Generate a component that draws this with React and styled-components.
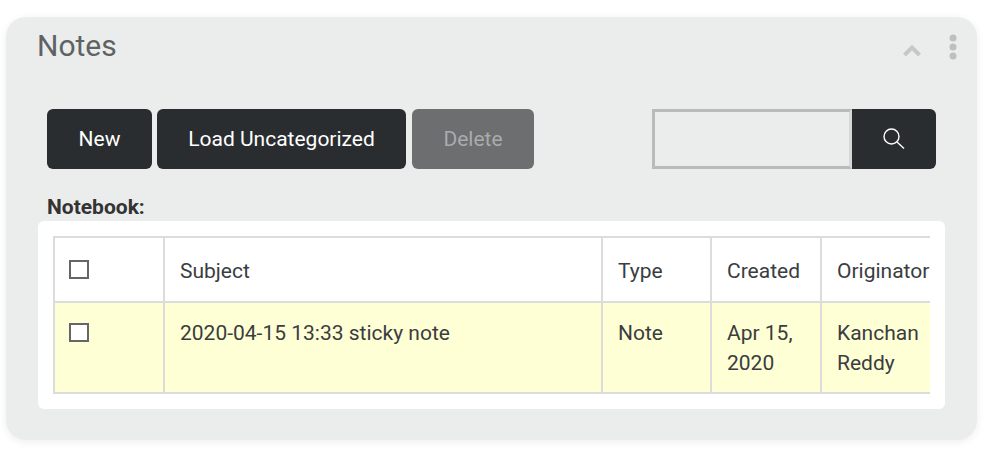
import React from "react";
import styled, { createGlobalStyle } from "styled-components";

const Global = createGlobalStyle`
  html, body { margin: 0; padding: 0; background: #fff; }
  body { font-family: Roboto, "Liberation Sans", sans-serif; color: #333; }
`;

const Page = styled.div`
  width: 989px;
  height: 452px;
  padding: 17px 12px 12px 6px;
  box-sizing: border-box;
`;

const Panel = styled.section`
  height: 423px;
  box-sizing: border-box;
  background: #ebeded;
  border-radius: 20px;
  box-shadow: 0 2px 8px rgba(0, 0, 0, 0.07);
  padding: 0 32px 0 32px;
`;

const Header = styled.header`
  display: flex;
  align-items: flex-start;
  justify-content: space-between;
  height: 92px;
  margin-left: -1px;
`;

const Title = styled.h2`
  margin: 11px 0 0;
  font-size: 30px;
  line-height: 36px;
  font-weight: 400;
  color: #5f6262;
`;

const HeaderIcons = styled.div`
  display: flex;
  align-items: flex-start;
  margin: 17px -12px 0 0;
  gap: 28px;
`;

const Toolbar = styled.div`
  display: flex;
  align-items: stretch;
  height: 60px;
  margin-left: 9px;
  width: 889px;
`;

const Button = styled.button`
  height: 60px;
  width: ${(p) => p.$w}px;
  margin-right: ${(p) => p.$mr || 0}px;
  padding: 0;
  border: 0;
  border-radius: 6px;
  background: ${(p) => (p.disabled ? "#6c6e70" : "#2a2d30")};
  color: ${(p) => (p.disabled ? "#a9abac" : "#fff")};
  font: 400 21px/30px Roboto, sans-serif;
`;

const Search = styled.div`
  display: flex;
  margin-left: auto;
`;

const SearchInput = styled.input`
  width: 200px;
  height: 60px;
  box-sizing: border-box;
  border: 3px solid #b9baba;
  border-right-color: #d6d7d7;
  background: #ebeded;
  outline: none;
  padding: 0 8px;
`;

const SearchButton = styled.button`
  width: 84px;
  height: 60px;
  padding: 0;
  border: 0;
  border-radius: 0 6px 6px 0;
  background: #2a2d30;
  display: flex;
  align-items: center;
  justify-content: center;
`;

const Label = styled.div`
  margin: 26px 0 0 9px;
  height: 26px;
  font-size: 21px;
  line-height: 24px;
  font-weight: 700;
  color: #333;
`;

const Card = styled.div`
  background: #fff;
  border-radius: 6px;
  width: 907px;
  height: 188px;
  box-sizing: border-box;
  padding: 15px;
`;

const TableClip = styled.div`
  width: 877px;
  overflow: hidden;
`;

const Table = styled.table`
  width: 877px;
  table-layout: fixed;
  border-collapse: collapse;
  font-size: 21px;
  line-height: 30px;
  color: #3a3d40;
`;

const Cell = styled.td`
  border: 2px solid #dcdcdc;
  padding: 15px 15px 14px;
  vertical-align: top;
  white-space: ${(p) => (p.$nowrap ? "nowrap" : "normal")};
  overflow: hidden;
  box-sizing: border-box;
`;

const HeadCell = styled(Cell).attrs({ as: "th" })`
  font-weight: 400;
  text-align: left;
  height: 65px;
  padding-top: 18px;
  padding-bottom: 15px;
  vertical-align: middle;
`;

const Row = styled.tr`
  background: ${(p) => p.$bg};
`;

const Check = styled.span`
  display: block;
  width: 20px;
  height: 19px;
  box-sizing: border-box;
  border: 2px solid #666;
  background: #fff;
  margin-top: ${(p) => p.$mt}px;
  margin-left: -1px;
`;

const Chevron = () => (
  <svg width="18" height="14" viewBox="0 0 18 14" style={{ marginTop: 10 }}>
    <path d="M1.5 11 L9 3.5 L16.5 11" fill="none" stroke="#c6c8c8" strokeWidth="4" />
  </svg>
);

const Dots = () => (
  <svg width="8" height="26" viewBox="0 0 8 26">
    <circle cx="4" cy="4" r="3.5" fill="#bdbfc0" />
    <circle cx="4" cy="13" r="3.5" fill="#bdbfc0" />
    <circle cx="4" cy="22" r="3.5" fill="#bdbfc0" />
  </svg>
);

const Magnifier = () => (
  <svg width="24" height="24" viewBox="0 0 24 24">
    <circle cx="9.5" cy="9.5" r="7.5" fill="none" stroke="#fff" strokeWidth="1.4" />
    <path d="M15 15 L22 21.5" stroke="#fff" strokeWidth="1.4" fill="none" />
  </svg>
);

export default function App() {
  return (
    <Page>
      <Global />
      <Panel>
        <Header>
          <Title>Notes</Title>
          <HeaderIcons>
            <Chevron />
            <Dots />
          </HeaderIcons>
        </Header>
        <Toolbar>
          <Button $w={105} $mr={5}>New</Button>
          <Button $w={249} $mr={6}>Load Uncategorized</Button>
          <Button $w={122} disabled>Delete</Button>
          <Search>
            <SearchInput aria-label="Search" />
            <SearchButton aria-label="Search"><Magnifier /></SearchButton>
          </Search>
        </Toolbar>
        <Label>Notebook:</Label>
        <Card>
          <TableClip>
            <Table>
              <colgroup>
                <col style={{ width: 110 }} />
                <col style={{ width: 438 }} />
                <col style={{ width: 109 }} />
                <col style={{ width: 110 }} />
                <col style={{ width: 110 }} />
              </colgroup>
              <thead>
                <Row $bg="#fff">
                  <HeadCell><Check $mt={-3} /></HeadCell>
                  <HeadCell>Subject</HeadCell>
                  <HeadCell>Type</HeadCell>
                  <HeadCell>Created</HeadCell>
                  <HeadCell $nowrap>Originator</HeadCell>
                </Row>
              </thead>
              <tbody>
                <Row $bg="#ffffd5">
                  <Cell><Check $mt={5} /></Cell>
                  <Cell>2020-04-15 13:33 sticky note</Cell>
                  <Cell>Note</Cell>
                  <Cell>Apr 15, 2020</Cell>
                  <Cell>Kanchan Reddy</Cell>
                </Row>
              </tbody>
            </Table>
          </TableClip>
        </Card>
      </Panel>
    </Page>
  );
}
